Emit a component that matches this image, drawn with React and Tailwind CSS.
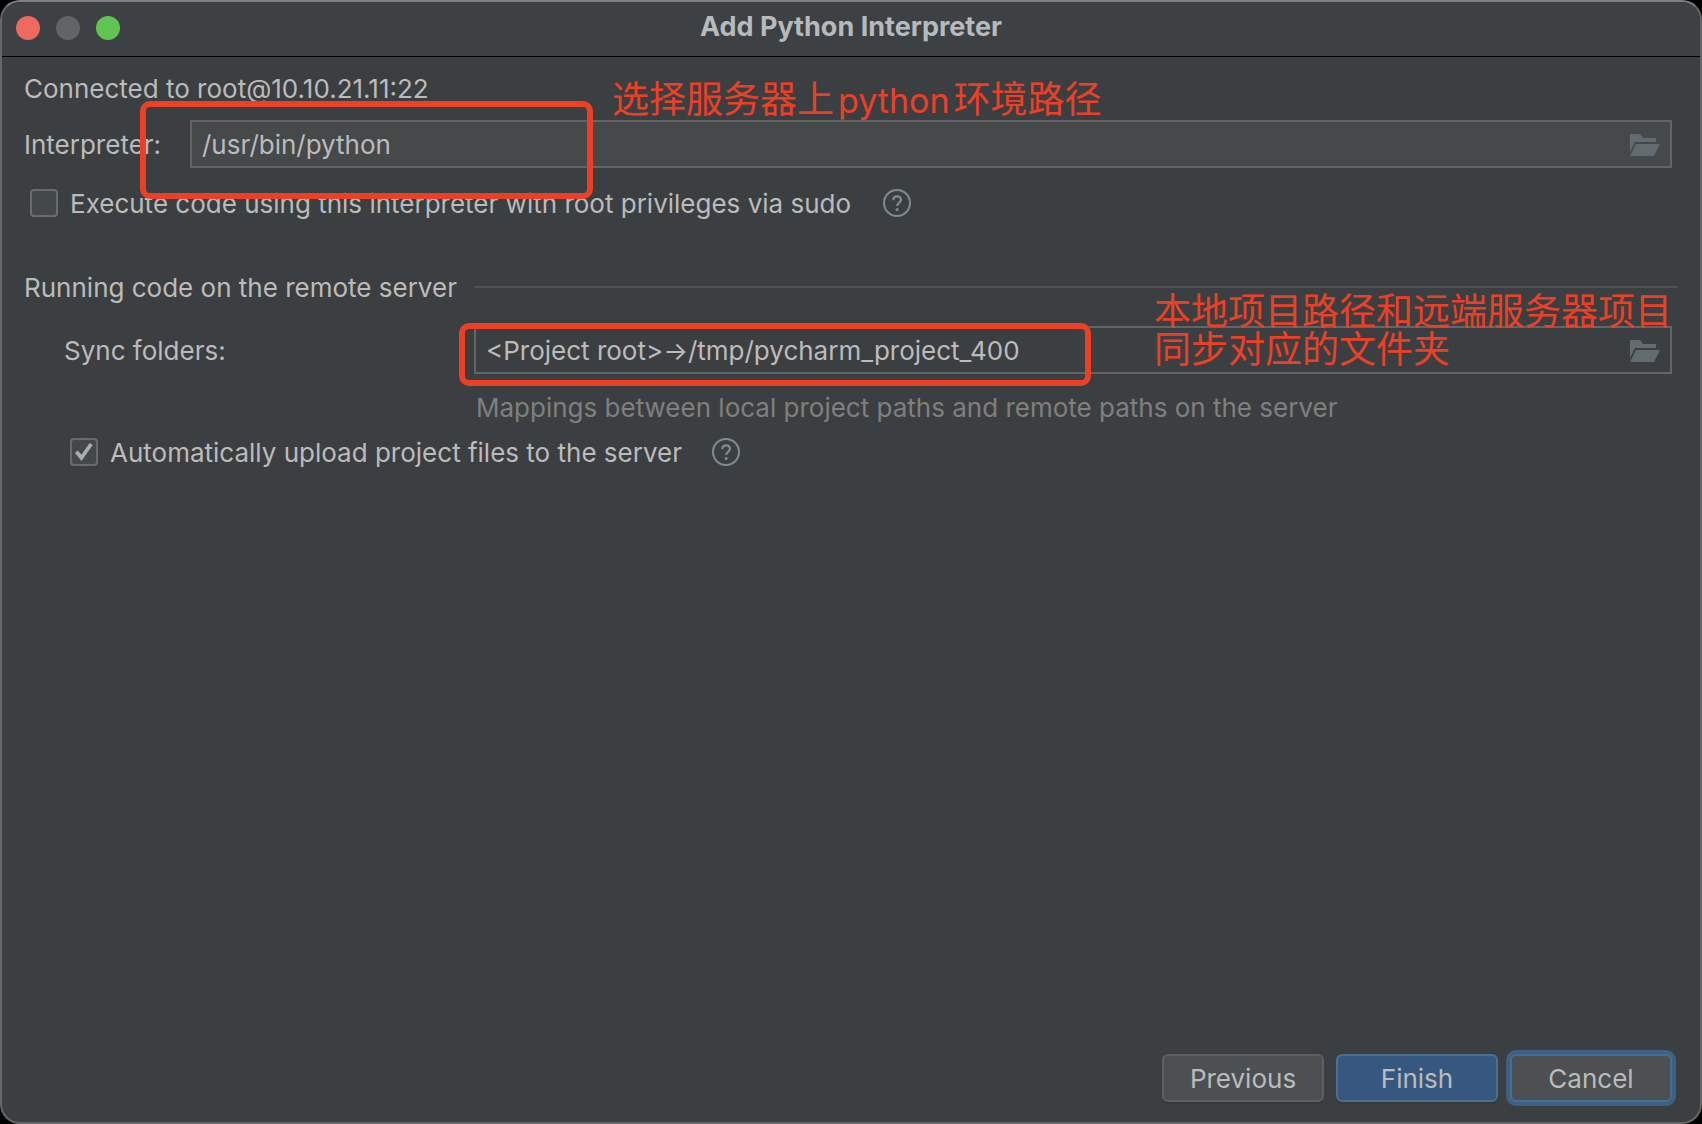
import React from "react";

function FolderIcon() {
  return (
    <svg width="30" height="24" viewBox="0 -2 30 24" fill="#616b70" aria-hidden="true">
      <path d="M0 0h10l3 4h13v4H5L0 18z" />
      <path d="M6 10h24l-6 12H0z" />
    </svg>
  );
}

function HelpButton({ label }) {
  return (
    <button type="button" aria-label={label} className="size-7 shrink-0">
      <svg width="28" height="28" viewBox="0 0 28 28" fill="none" stroke="#7f8b91" strokeWidth="2" aria-hidden="true">
        <circle cx="14" cy="14" r="13" />
        <path d="M10.3 11.2c0-2.3 1.6-3.8 3.8-3.8s3.8 1.4 3.8 3.4c0 3-3.8 3-3.8 6.2" strokeWidth="2.2" />
        <circle cx="14.1" cy="20.4" r="1.5" fill="#7f8b91" stroke="none" />
      </svg>
    </button>
  );
}

function Checkbox({ id, defaultChecked }) {
  return (
    <span className="relative size-7 shrink-0">
      <input
        id={id}
        type="checkbox"
        defaultChecked={defaultChecked}
        className="peer block size-7 appearance-none rounded-[4px] border-2 border-[#6b6b6b] bg-[#43494a]"
      />
      <svg
        width="28"
        height="28"
        viewBox="0 0 28 28"
        fill="none"
        stroke="#a9abac"
        strokeWidth="3.8"
        className="pointer-events-none absolute inset-0 hidden peer-checked:block"
        aria-hidden="true"
      >
        <path d="M6.4 13.8l5 6L21.2 6" />
      </svg>
    </span>
  );
}

function PathField({ id, value, browseLabel, className }) {
  return (
    <div className={`flex h-12 min-w-0 flex-1 items-center border-2 border-[#646464] pr-[10px] ${className}`}>
      <input
        id={id}
        type="text"
        defaultValue={value}
        className="h-full min-w-0 flex-1 bg-transparent pl-[10px] outline-none"
      />
      <button type="button" aria-label={browseLabel} className="shrink-0">
        <FolderIcon />
      </button>
    </div>
  );
}

export default function App() {
  return (
    <div className="min-h-screen bg-black font-['Inter','Noto_Sans_CJK_SC',sans-serif] text-[26px] leading-8 text-[#bbbbbb]">
      <main className="flex min-h-screen flex-col overflow-hidden rounded-[20px] border-2 border-[#646667] border-t-[#7c8081] bg-[#3c3f41]">
        <header className="relative flex h-[55px] items-center justify-center border-b border-black bg-[#3d4143]">
          <div className="absolute top-[14px] left-[14px] flex gap-4">
            <button type="button" aria-label="Close" className="size-6 rounded-full bg-[#ec6a5e]" />
            <button type="button" aria-label="Minimize" className="size-6 rounded-full bg-[#606466]" />
            <button type="button" aria-label="Zoom" className="size-6 rounded-full bg-[#61c554]" />
          </div>
          <h1 className="pb-1 text-[27px] font-bold text-[#b6babd]">Add Python Interpreter</h1>
        </header>

        <form className="flex flex-1 flex-col pt-4 pr-7 pb-5 pl-[22px]">
          <p>Connected to root@10.10.21.11:22</p>

          <div className="relative mt-[15px] flex items-center">
            <label htmlFor="interpreter" className="w-[166px] shrink-0 pt-0.5">
              Interpreter:
            </label>
            <PathField
              id="interpreter"
              value="/usr/bin/python"
              browseLabel="Browse interpreter"
              className="bg-[#45494a]"
            />
            <div className="pointer-events-none absolute -top-[19px] left-[116px] z-10 h-[98px] w-[453px] rounded-[10px] border-6 border-[#ec4026]" />
            <p className="pointer-events-none absolute -top-10 left-[588px] z-10 text-[37px] leading-10 whitespace-nowrap text-[#ec4026]">
              选择服务器上<span className="mx-1 text-[34px]">python</span>环境路径
            </p>
          </div>

          <div className="mt-[18px] flex items-center pl-[6px]">
            <Checkbox id="sudo" />
            <label htmlFor="sudo" className="mr-8 ml-3 pt-0.5">
              Execute code using this interpreter with root privileges via sudo
            </label>
            <HelpButton label="About root privileges" />
          </div>

          <fieldset className="mt-[50px]">
            <legend className="flex w-full items-center">
              <span className="w-[450px] shrink-0 pt-0.5">Running code on the remote server</span>
              <span className="-mr-[6px] h-0.5 flex-1 bg-[#515151]" />
            </legend>

            <div className="relative mt-[22px] flex items-center">
              <label htmlFor="sync" className="w-[450px] shrink-0 pt-0.5 pl-10">
                Sync folders:
              </label>
              <PathField
                id="sync"
                value="<Project root>→/tmp/pycharm_project_400"
                browseLabel="Browse sync folders"
                className="bg-transparent"
              />
              <div className="pointer-events-none absolute -top-[3px] left-[435px] z-10 h-[63px] w-[632px] rounded-[10px] border-6 border-[#ec4026]" />
              <p className="pointer-events-none absolute -top-[33px] right-0 z-10 text-[37px] leading-[38px] whitespace-nowrap text-[#ec4026]">
                本地项目路径和远端服务器项目
                <br />
                同步对应的文件夹
              </p>
            </div>

            <p className="mt-[18px] pl-[452px] text-[#7f7f7f]">
              Mappings between local project paths and remote paths on the server
            </p>

            <div className="mt-[11px] flex items-center pl-[46px]">
              <Checkbox id="upload" defaultChecked />
              <label htmlFor="upload" className="mr-[30px] ml-3 pt-0.5">
                Automatically upload project files to the server
              </label>
              <HelpButton label="About automatic upload" />
            </div>
          </fieldset>

          <footer className="mt-auto flex justify-end gap-3">
            <button
              type="button"
              className="h-12 w-[162px] rounded-md border-2 border-[#5e6060] bg-[#4c5052] pt-0.5 shadow-[0_2px_0_#36393b]"
            >
              Previous
            </button>
            <button
              type="submit"
              className="h-12 w-[162px] rounded-md border-2 border-[#4c708c] bg-[#365880] pt-0.5 shadow-[0_2px_0_#36393b]"
            >
              Finish
            </button>
            <button
              type="button"
              className="h-12 w-[162px] rounded-md border-2 border-[#466d94] bg-[#4c5052] pt-0.5 ring-4 ring-[#3d6185]"
            >
              Cancel
            </button>
          </footer>
        </form>
      </main>
    </div>
  );
}
